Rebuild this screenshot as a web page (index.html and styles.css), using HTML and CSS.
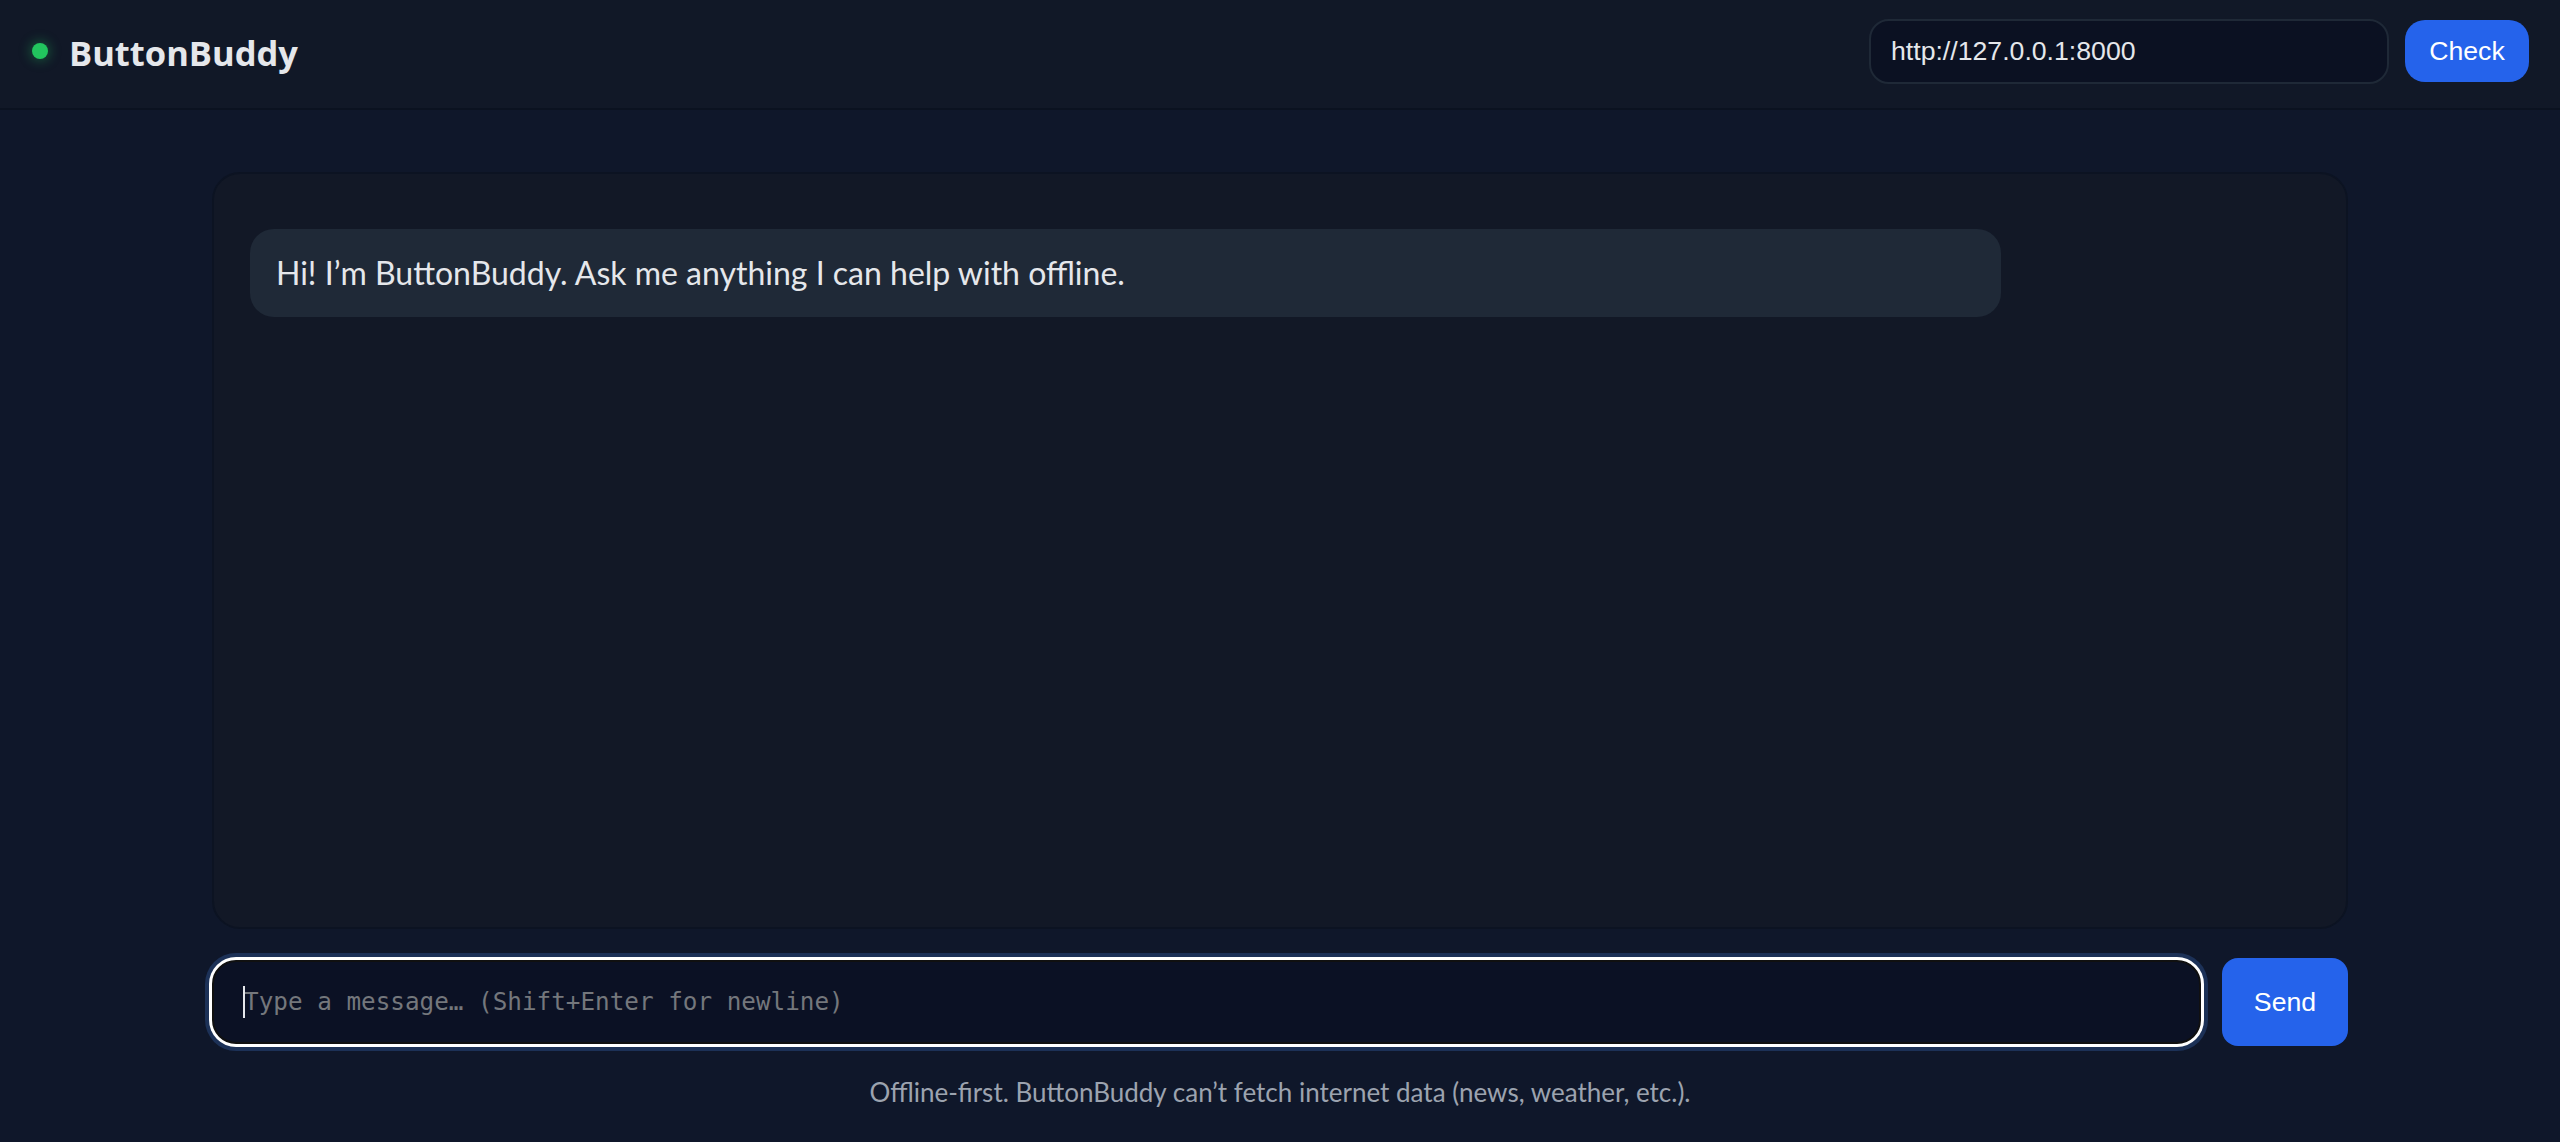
FILE: index.html
```html
<!DOCTYPE html>
<html lang="en">
<head>
<meta charset="utf-8">
<title>ButtonBuddy</title>
<link rel="stylesheet" href="styles.css">
</head>
<body>
  <header class="topbar">
    <div class="brand">
      <span class="dot"></span>
      <h1 class="title">ButtonBuddy</h1>
    </div>
    <div class="server">
      <input class="server-input" type="text" value="http://127.0.0.1:8000">
      <button class="btn check" type="button">Check</button>
    </div>
  </header>
  <main class="main">
    <section class="chat">
      <div class="msg bot">Hi! I’m ButtonBuddy. Ask me anything I can help with offline.</div>
    </section>
    <form class="composer">
      <div class="field">
        <span class="caret"></span>
        <textarea class="input" rows="1" placeholder="Type a message… (Shift+Enter for newline)"></textarea>
      </div>
      <button class="btn send" type="button">Send</button>
    </form>
    <p class="note">Offline-first. ButtonBuddy can’t fetch internet data (news, weather, etc.).</p>
  </main>
</body>
</html>
```
FILE: styles.css
```css
* { box-sizing: border-box; }
html, body { margin: 0; padding: 0; }
body {
  background: #0f172a;
  color: #e5e7eb;
  font-family: Lato, "Open Sans", sans-serif;
  height: 1142px;
  overflow: hidden;
}
.topbar {
  height: 110px;
  background: #111827;
  border-bottom: 2px solid #0b1220;
  display: flex;
  align-items: center;
  justify-content: space-between;
  padding: 0 31px 6px 32px;
}
.brand { display: flex; align-items: center; gap: 21px; }
.dot {
  width: 16px; height: 16px; border-radius: 50%;
  background: #22c55e;
  box-shadow: 0 0 12px 2px rgba(34, 197, 94, 0.35);
}
.title {
  margin: 0;
  font-family: "Open Sans", Lato, sans-serif;
  font-size: 34.5px;
  font-weight: 700;
  color: #e5e7eb;
  line-height: 1;
  padding-top: 4px;
}
.server { display: flex; align-items: center; gap: 16px; }
.server-input {
  width: 520px; height: 65px;
  background: #0b1122;
  border: 2px solid #1f2937;
  border-radius: 20px;
  color: #e5e7eb;
  font-family: "Liberation Sans", Arial, sans-serif;
  font-size: 26.67px;
  padding: 0 20px;
  outline: none;
}
.btn {
  background: #2563eb;
  color: #ffffff;
  border: none;
  font-family: "Liberation Sans", Arial, sans-serif;
  font-size: 26.67px;
  cursor: pointer;
}
.check {
  width: 124px; height: 62px;
  border-radius: 20px;
  padding: 0;
}
.main {
  width: 2136px;
  margin: 0 auto;
  padding-top: 62px;
}
.chat {
  height: 757px;
  background: #121826;
  border: 2px solid #0c1322;
  border-radius: 28px;
  padding: 55px 36px;
}
.msg {
  max-width: 85%;
  background: #1f2937;
  border-radius: 24px;
  padding: 20px 26px;
  font-size: 32px;
  line-height: 48px;
  color: #e5e7eb;
}
.composer {
  display: flex;
  align-items: center;
  gap: 21px;
  margin: 29px 0 0 0;
}
.field { flex: 1; position: relative; display: flex; }
.input {
  flex: 1;
  height: 84px;
  resize: none;
  overflow: hidden;
  background: #0b1124;
  border: 2px solid #101010;
  border-radius: 24px;
  box-shadow: 0 0 0 3px #ffffff, 0 0 0 7px #1c3157;
  color: #e5e7eb;
  font-family: "DejaVu Sans Mono", "Liberation Mono", monospace;
  font-size: 24.3px;
  line-height: 28px;
  padding: 26px 28px 26px 30px;
  outline: none;
  margin: 0;
}
.input::placeholder { color: #74777c; }
.caret {
  position: absolute;
  left: 31px;
  top: 26px;
  width: 2px;
  height: 32px;
  background: #e5e7eb;
}
.send {
  width: 126px; height: 88px;
  border-radius: 16px;
  padding: 0;
}
.note {
  margin: 28px 0 0 0;
  text-align: center;
  font-size: 26px;
  line-height: 36px;
  color: #9ca3af;
}
```
